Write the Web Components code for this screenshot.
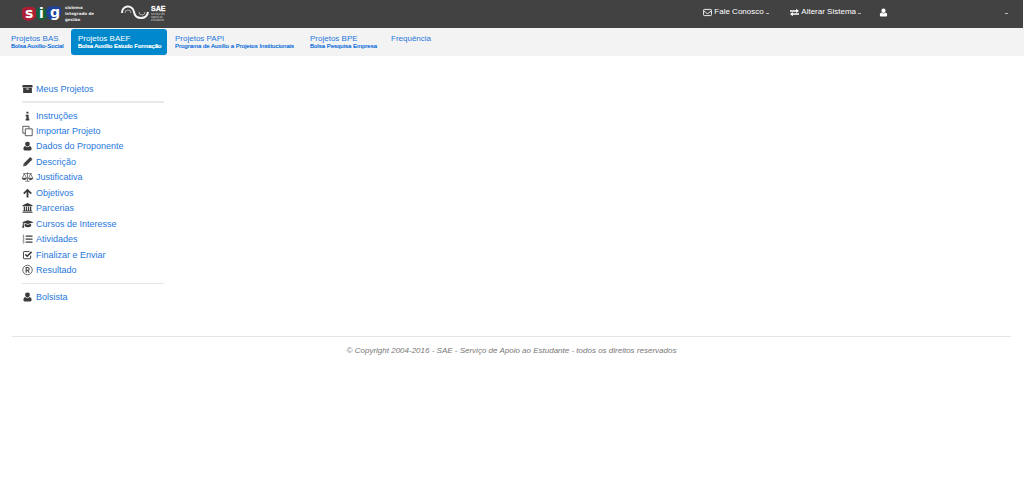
<!DOCTYPE html>
<html lang="pt-BR">
<head>
<meta charset="utf-8">
<title>SIG - Projetos BAEF</title>
<style>
body { margin: 0; background: #fff; font-family: "Liberation Sans", Arial, sans-serif; }
</style>
</head>
<body>
<sig-header>
  <sig-menu icon="mail">Fale Conosco</sig-menu>
  <sig-menu icon="swap">Alterar Sistema</sig-menu>
  <sig-menu icon="user" label="Usuário" class="account"></sig-menu>
</sig-header>
<sig-nav>
  <sig-tab note="Bolsa Auxílio-Social">Projetos BAS</sig-tab>
  <sig-tab note="Bolsa Auxílio Estudo Formação" active>Projetos BAEF</sig-tab>
  <sig-tab note="Programa de Auxílio a Projetos Institucionais">Projetos PAPI</sig-tab>
  <sig-tab note="Bolsa Pesquisa Empresa">Projetos BPE</sig-tab>
  <sig-tab>Frequência</sig-tab>
</sig-nav>
<sig-sidebar>
  <sig-link slot="top" icon="archive">Meus Projetos</sig-link>
  <sig-link icon="info">Instruções</sig-link>
  <sig-link icon="copy">Importar Projeto</sig-link>
  <sig-link icon="user">Dados do Proponente</sig-link>
  <sig-link icon="pencil">Descrição</sig-link>
  <sig-link icon="scale">Justificativa</sig-link>
  <sig-link icon="up">Objetivos</sig-link>
  <sig-link icon="bank">Parcerias</sig-link>
  <sig-link icon="cap">Cursos de Interesse</sig-link>
  <sig-link icon="list">Atividades</sig-link>
  <sig-link icon="check">Finalizar e Enviar</sig-link>
  <sig-link icon="reg">Resultado</sig-link>
  <sig-link slot="bottom" icon="user">Bolsista</sig-link>
</sig-sidebar>
<sig-footer>© Copyright 2004-2016 - SAE - Serviço de Apoio ao Estudante - todos os direitos reservados</sig-footer>

<script>
const ICONS = {
  mail: '<rect x="1" y="2.5" width="14" height="11" rx="1.5" fill="none" stroke="currentColor" stroke-width="1.6"/><path d="M1.5 5l5 4.3q1.5 1.2 3 0l5-4.3" fill="none" stroke="currentColor" stroke-width="1.6"/>',
  swap: '<path d="M0 4h11V1.500L16 5.300 11 9V6.500H0zM16 9.500H5V7L0 10.800 5 14.500V12h11z"/>',
  user: '<path d="M8 1a3.700 3.700 0 0 1 3.700 3.900C11.700 7 10 9 8 9S4.300 7 4.300 4.900A3.700 3.700 0 0 1 8 1zM4.300 7.800Q8 11.800 11.700 7.800C14 8.300 14.500 10.500 14.500 12.800Q14.500 15 12.500 15h-9Q1.500 15 1.500 12.800C1.500 10.500 2 8.300 4.300 7.800z"/>',
  archive: '<path d="M0 1.500h16V5.500H0zM1 6.200h14V14.500H1zM6.500 7.300a.7.7 0 0 0 0 1.400h3a.7.7 0 0 0 0-1.400z" fill-rule="evenodd"/>',
  info: '<path d="M6.300 1h3.200v3H6.300zM5 6h4.800v6.500H11V15H5v-2.500h1.300v-4H5z"/>',
  copy: '<path d="M4 11.500H.5v-11h10V4M4.500 4.500h11v11h-11zM8 4.500" fill="none" stroke="currentColor" stroke-width="1.300"/>',
  pencil: '<path d="M10.800 2l3.200 3.200-8.300 8.300L1.500 14.500l1-4.200zM11.600 1.300q1-.9 1.900 0l1.300 1.300q.8.9 0 1.900l-.5.400L11 1.800zM3.300 11.300l-.5 1.900 1.900-.5z" fill-rule="evenodd" stroke="currentColor" stroke-width=".8"/>',
  scale: '<path d="M1 2.500h14M8 .5v14M4.500 14.800h7M3 3L-.5 10h7zM13 3L9.500 10h7z" fill="none" stroke="currentColor" stroke-width="1"/><path d="M-1 10h8q-.6 2.700-4 2.700T-1 10zM9 10h8q-.6 2.700-4 2.700T9 10z"/>',
  up: '<path d="M8 1l7 7-1.900 1.900L9.500 6.400V15h-3V6.400L2.900 9.900 1 8z"/>',
  bank: '<path d="M8 0l8 3.500V5H0V3.500zM2 6h2v6h1.300V6h2v6h1.400V6h2v6H12V6h2v6h1v1.200H1V12h1zM0 14h16v1.500H0z"/>',
  cap: '<path d="M8.500 2L18 5 8.500 8 3.500 6.200Q2 7 2 9l.8 5H-.500l.8-5Q.500 7 1.700 5.800L-1 5zM3.600 7.500L8.500 9.200 13.600 7.500l.3 3.500Q12 13.200 8.500 13.200T3.300 11z"/>',
  list: '<path d="M5 2.200h11v2H5zM5 7h11v2H5zM5 11.800h11v2H5z"/><path d="M.5 2l1-.8v4M.3 5.200h2.500M.3 7q2.200-1 2.200.4 0 .8-2 2.400h2.500M.3 11.500h2.200l-1 1.400q1.400.1 1.100 1.200-.6 1-2.300.4" fill="none" stroke="currentColor" stroke-width=".8"/>',
  check: '<path d="M13 9v4q0 1-1 1H2.500q-1 0-1-1V3.500q0-1 1-1H11" fill="none" stroke="currentColor" stroke-width="1.500"/><path d="M4.500 7l3 3L14.500 3" fill="none" stroke="currentColor" stroke-width="2.400"/>',
  reg: '<circle cx="8" cy="8" r="7.600" fill="none" stroke="currentColor" stroke-width="1.200"/><path d="M5.800 12.300V4h2.500q2.400 0 2.400 2.200T8.300 8.500H6M8.200 8.500L10.900 12.300" fill="none" stroke="currentColor" stroke-width="1.700"/>'
};
const icon = n => `<svg viewBox="0 0 16 16" fill="currentColor" aria-hidden="true">${ICONS[n]}</svg>`;

function define(name, render) {
  customElements.define(name, class extends HTMLElement {
    connectedCallback() {
      if (!this.shadowRoot) this.attachShadow({ mode: 'open' }).innerHTML = render(this);
    }
  });
}

define('sig-logo', () => `
<style>
:host { display: block; }
svg { display: block; }
.s { font: bold 14px "DejaVu Sans", sans-serif; }
.t { font: bold 4px "DejaVu Sans", sans-serif; }
</style>
<svg width="80" height="28" viewBox="20 0 80 28" role="img" aria-label="SIG sistema integrado de gestão">
  <path d="M23 8q5-2 10-1 5 3 4 8-2 5-9 6-6-1-6-7 0-4 1-6z" fill="#ae1e35"/>
  <path d="M36 9q5-2 10 0l3 5q-2 6-9 6-5-3-4-7z" fill="#17603b"/>
  <path d="M48 7q6-2 12 0 3 4 0 9-6 5-11 3-5-6-1-12z" fill="#20429b"/>
  <g class="s" fill="#fff"><text x="25" y="18">s</text><text x="39" y="18">i</text><text x="50" y="17">g</text></g>
  <g class="t" fill="#e8e8e8"><text x="65" y="9">sistema</text><text x="65" y="15">integrado de</text><text x="65" y="21">gestão</text></g>
</svg>`);

define('sae-logo', () => `
<style>
:host { display: block; }
svg { display: block; }
.b { font: bold 7px "Liberation Sans", sans-serif; }
.t { font: 3px "Liberation Sans", sans-serif; }
</style>
<svg width="50" height="28" viewBox="120 0 50 28" role="img" aria-label="SAE Serviço de Apoio ao Estudante">
  <path d="M122 13a6 6 0 0 1 12-1q1 6 7 6 6 0 7-6" fill="none" stroke="#f5f5f5" stroke-width="2"/>
  <path d="M125 13a3 3 0 0 1 6 0M139 12a3 3 0 0 0 6 0" fill="none" stroke="#aaa" stroke-width="1"/>
  <text class="b" x="151" y="11" fill="#fff" stroke="#fff" stroke-width=".3">SAE</text>
  <g class="t" fill="#ccc"><text x="151" y="15">serviço de</text><text x="151" y="18">apoio ao</text><text x="151" y="21">estudante</text></g>
</svg>`);

define('sig-header', () => `
<style>
:host { display: block; margin-right: 1px; background: #424242; }
header { display: flex; align-items: center; height: 28px; padding: 0 15px 0 20px; }
sae-logo { margin-left: 20px; }
.menus { display: flex; align-items: center; gap: 18px; margin: 0 0 4px auto; }
</style>
<header><sig-logo></sig-logo><sae-logo></sae-logo><div class="menus"><slot></slot></div></header>`);

define('sig-menu', el => `
<style>
:host { display: block; min-width: 69px; }
:host(.account) { width: 129px; }
button { display: flex; align-items: center; gap: 2px; width: 100%; margin: 0; padding: 0; border: 0; background: none; color: #fff; font: 8px/12px "Liberation Sans", Arial, sans-serif; cursor: pointer; }
svg { width: 9px; height: 9px; }
i { width: 3px; height: 1px; background: #bbb; margin-top: 2px; }
:host(.account) i { margin-left: auto; }
</style>
<button type="button" ${el.getAttribute('label') ? `aria-label="${el.getAttribute('label')}"` : ''}>${icon(el.getAttribute('icon'))}<slot></slot><i></i></button>`);

define('sig-nav', () => `
<style>
:host { display: block; background: #f3f3f3; }
nav { display: grid; grid-template-columns: 66px 96px 134px 80px auto; justify-content: start; gap: 1px; padding: 1px 4px; }
</style>
<nav><slot></slot></nav>`);

define('sig-tab', el => `
<style>
:host { display: block; }
a { display: block; box-sizing: border-box; height: 26px; padding: 5px 7px; border-radius: 3px; color: #1f78dd; font-size: 8px; line-height: 9px; text-decoration: none; white-space: nowrap; }
small { display: block; font-size: 6px; line-height: 7px; text-shadow: 0 0 currentColor; }
:host([active]) a { background: #0088cc; color: #fff; }
</style>
<a href="#"><slot></slot>${el.getAttribute('note') ? `<small>${el.getAttribute('note')}</small>` : ''}</a>`);

define('sig-sidebar', () => `
<style>
:host { display: block; width: 142px; padding: 25px 22px 0; }
hr { margin: 5px 0; border: 0; border-top: 1px solid #e6e6e6; }
hr.thick { border-top: 2px solid #e9e9e9; }
.items { display: grid; grid-auto-rows: 1fr; height: 170px; }
</style>
<nav><slot name="top"></slot><hr class="thick"><div class="items"><slot></slot></div><hr><slot name="bottom"></slot></nav>`);

define('sig-link', el => `
<style>
:host { display: block; }
a { display: flex; align-items: center; gap: 3px; height: 15px; color: #1f78dd; font-size: 9px; line-height: 12px; text-decoration: none; }
svg { width: 11px; height: 10px; color: #3a3a3a; overflow: visible; }
</style>
<a href="#">${icon(el.getAttribute('icon'))}<span><slot></slot></span></a>`);

define('sig-footer', () => `
<style>
:host { display: block; margin: 32px 13px 0 12px; border-top: 1px solid #e4e4e4; padding: 8px 0; text-align: center; color: #777; font-size: 8px; line-height: 12px; font-style: italic; }
</style>
<footer><slot></slot></footer>`);
</script>
</body>
</html>
